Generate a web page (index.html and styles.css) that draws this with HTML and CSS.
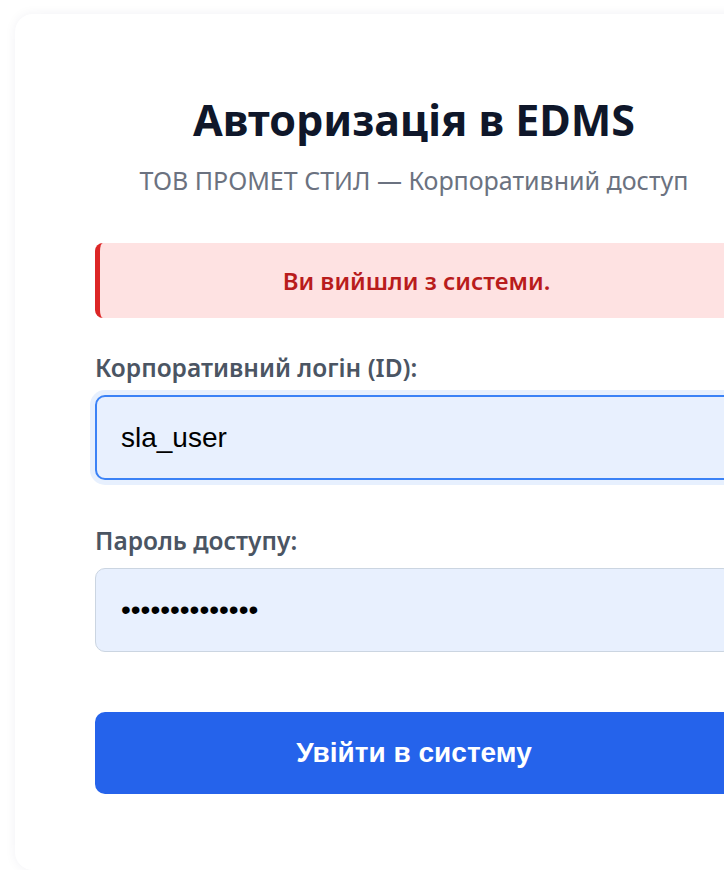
FILE: index.html
```html
<!DOCTYPE html>
<html lang="uk">
<head>
<meta charset="utf-8">
<title>Авторизація в EDMS</title>
<link rel="stylesheet" href="styles.css">
</head>
<body>
<main class="login-card">
  <h1 class="login-title">Авторизація в EDMS</h1>
  <p class="login-subtitle">ТОВ ПРОМЕТ СТИЛ — Корпоративний доступ</p>

  <div class="alert alert-error">Ви вийшли з системи.</div>

  <form class="login-form">
    <div class="field">
      <label class="field-label" for="login">Корпоративний логін (ID):</label>
      <input class="field-input is-focused" id="login" type="text" value="sla_user">
    </div>
    <div class="field">
      <label class="field-label" for="password">Пароль доступу:</label>
      <input class="field-input" id="password" type="password" value="12345678901234">
    </div>
    <button class="btn-submit" type="button">Увійти в систему</button>
  </form>
</main>
</body>
</html>
```

FILE: styles.css
```css
html, body {
  margin: 0;
  padding: 0;
  background: #ffffff;
}

body {
  font-family: "Noto Sans", "Open Sans", sans-serif;
  overflow: hidden;
}

.login-card {
  box-sizing: border-box;
  width: 798px;
  margin: 14px 0 0 15px;
  padding: 80px 80px 76px;
  background: #ffffff;
  border-radius: 18px;
  box-shadow: 0 0 12px rgba(30, 41, 80, 0.06);
}

.login-title {
  margin: 0;
  text-align: center;
  font-size: 43px;
  font-weight: 700;
  line-height: 52px;
  color: #0f172a;
}

.login-subtitle {
  margin: 18px 0 0;
  text-align: center;
  font-size: 25px;
  line-height: 33px;
  color: #6b7280;
}

.alert {
  box-sizing: border-box;
  height: 75px;
  margin-top: 46px;
  display: flex;
  align-items: center;
  justify-content: center;
  border-radius: 8px;
  font-size: 24px;
  font-weight: 600;
}

.alert-error {
  background: #fee2e2;
  border-left: 5px solid #dc2626;
  color: #b91c1c;
}

.login-form {
  display: flex;
  flex-direction: column;
}

.field {
  display: flex;
  flex-direction: column;
  margin-top: 35px;
}

.field + .field {
  margin-top: 46px;
}

.field-label {
  font-size: 24.5px;
  font-weight: 600;
  line-height: 30px;
  color: #4b5563;
  margin-bottom: 12px;
}

.field-input {
  box-sizing: border-box;
  height: 84px;
  padding: 0 25px;
  border: 1px solid #cbd5e1;
  border-radius: 10px;
  background: #e8f0fe;
  font-family: "Liberation Sans", Arial, sans-serif;
  font-size: 28px;
  color: #000000;
  outline: none;
}

.field-input.is-focused {
  height: 85px;
  border: 2px solid #3b82f6;
  padding: 0 24px;
  box-shadow: 0 0 0 5px rgba(59, 130, 246, 0.12);
}

.btn-submit {
  height: 82px;
  margin-top: 60px;
  border: none;
  border-radius: 10px;
  background: #2563eb;
  color: #ffffff;
  font-family: "Liberation Sans", Arial, sans-serif;
  font-size: 28px;
  font-weight: 700;
  cursor: pointer;
}
```
